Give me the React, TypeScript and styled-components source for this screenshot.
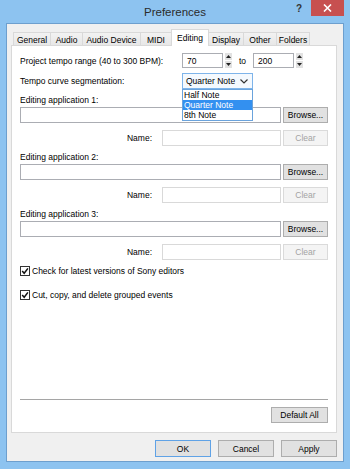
import { createGlobalStyle, styled } from "styled-components"

const GlobalStyle = createGlobalStyle`
  html, body {
    margin: 0;
    padding: 0;
  }
  body {
    font-family: "Liberation Sans", Arial, sans-serif;
    font-size: 8.5px;
    color: #000;
  }
  * {
    box-sizing: border-box;
  }
`

const tabs = [
  { label: "General", width: 38 },
  { label: "Audio", width: 33 },
  { label: "Audio Device", width: 59 },
  { label: "MIDI", width: 32 },
  { label: "Editing", width: 38, active: true },
  { label: "Display", width: 36 },
  { label: "Other", width: 34 },
  { label: "Folders", width: 34 },
]

const notes = ["Half Note", "Quarter Note", "8th Note"]

const SpinArrows = () => (
  <Spin>
    <SpinHalf>
      <svg width="5" height="3" viewBox="0 0 5 3">
        <path d="M0 3 L2.5 0 L5 3 Z" fill="#222" />
      </svg>
    </SpinHalf>
    <SpinHalf>
      <svg width="5" height="3" viewBox="0 0 5 3">
        <path d="M0 0 L2.5 3 L5 0 Z" fill="#222" />
      </svg>
    </SpinHalf>
  </Spin>
)

const EditingApp = ({ index }: { index: number }) => (
  <AppGroup>
    <FieldLabel>Editing application {index}:</FieldLabel>
    <InputRow>
      <TextBox />
      <Button>Browse...</Button>
    </InputRow>
    <NameRow>
      <NameLabel>Name:</NameLabel>
      <NameBox />
      <Button disabled>Clear</Button>
    </NameRow>
  </AppGroup>
)

const CheckRow = ({ children }: { children: string }) => (
  <Check>
    <svg width="10" height="10" viewBox="0 0 10 10">
      <rect x="0.5" y="0.5" width="9" height="9" fill="#fff" stroke="#333" />
      <path
        d="M2.2 5 L4.2 7.3 L7.9 2.4"
        fill="none"
        stroke="#111"
        strokeWidth="1.5"
      />
    </svg>
    {children}
  </Check>
)

const App = () => {
  return (
    <>
      <GlobalStyle />
      <Window>
        <TitleBar>
          <span />
          <Title>Preferences</Title>
          <Controls>
            <Help>?</Help>
            <Close>
              <svg width="9" height="8" viewBox="0 0 9 8">
                <path
                  d="M1 0.5 L8 7.5 M8 0.5 L1 7.5"
                  stroke="#fff"
                  strokeWidth="1.6"
                />
              </svg>
            </Close>
          </Controls>
        </TitleBar>
        <Client>
          <TabRow>
            {tabs.map((t) => (
              <Tab key={t.label} $width={t.width} $active={!!t.active}>
                {t.label}
              </Tab>
            ))}
          </TabRow>
          <Panel>
            <Row>
              <RowLabel>Project tempo range (40 to 300 BPM):</RowLabel>
              <SpinBox>70</SpinBox>
              <SpinArrows />
              <To>to</To>
              <SpinBox>200</SpinBox>
              <SpinArrows />
            </Row>
            <Row $top={5}>
              <RowLabel>Tempo curve segmentation:</RowLabel>
              <Combo>
                Quarter Note
                <svg width="8" height="5" viewBox="0 0 8 5">
                  <path
                    d="M0.5 0.5 L4 4 L7.5 0.5"
                    fill="none"
                    stroke="#333"
                    strokeWidth="1.2"
                  />
                </svg>
                <DropList>
                  {notes.map((n) => (
                    <DropItem key={n} $selected={n === "Quarter Note"}>
                      {n}
                    </DropItem>
                  ))}
                </DropList>
              </Combo>
            </Row>
            <EditingApp index={1} />
            <EditingApp index={2} />
            <EditingApp index={3} />
            <CheckList>
              <CheckRow>Check for latest versions of Sony editors</CheckRow>
              <CheckRow>Cut, copy, and delete grouped events</CheckRow>
            </CheckList>
            <Spacer />
            <Separator />
            <DefaultButton>Default All</DefaultButton>
          </Panel>
          <ButtonRow>
            <Button $width={56} $height={17} $primary>
              OK
            </Button>
            <Button $width={56} $height={17}>
              Cancel
            </Button>
            <Button $width={56} $height={17}>
              Apply
            </Button>
          </ButtonRow>
        </Client>
      </Window>
    </>
  )
}

export default App

const Window = styled.div`
  width: 350px;
  height: 469px;
  background: #8dc3f0;
  padding: 0 6px 7px 6px;
  display: flex;
  flex-direction: column;
`

const TitleBar = styled.div`
  height: 23px;
  display: grid;
  grid-template-columns: 1fr auto 1fr;
  align-items: start;
`

const Title = styled.div`
  font-size: 11.5px;
  color: #2b2b2b;
  line-height: 12px;
  margin-top: 6px;
`

const Controls = styled.div`
  display: flex;
  justify-content: flex-end;
  align-items: flex-start;
`

const Help = styled.span`
  font-size: 10px;
  font-weight: bold;
  color: #333;
  margin: 3px 9px 0 0;
`

const Close = styled.div`
  width: 33px;
  height: 16px;
  background: #c75050;
  display: flex;
  align-items: center;
  justify-content: center;
`

const Client = styled.div`
  flex: 1;
  border: 1px solid #6d9fce;
  background: #f0f0f0;
  padding: 5px 6px 4px 4px;
  display: flex;
  flex-direction: column;
`

const TabRow = styled.div`
  height: 16px;
  display: flex;
  align-items: flex-end;
  padding-left: 2px;
`

const Tab = styled.div<{ $width: number; $active: boolean }>`
  width: ${(p) => p.$width}px;
  height: ${(p) => (p.$active ? 17 : 13)}px;
  margin-left: -1px;
  margin-bottom: ${(p) => (p.$active ? -1 : 0)}px;
  border: 1px solid #d9d9d9;
  border-bottom: none;
  background: ${(p) =>
    p.$active ? "#fff" : "linear-gradient(#f2f2f2, #e7e7e7)"};
  display: flex;
  align-items: center;
  justify-content: center;
  padding-top: ${(p) => (p.$active ? 0 : 1)}px;
  white-space: nowrap;
  position: relative;
  z-index: ${(p) => (p.$active ? 1 : 0)};

  &:first-child {
    margin-left: 0;
  }
`

const Panel = styled.div`
  flex: 1;
  background: #fff;
  border: 1px solid #d9d9d9;
  padding: 7px 8px 9px 8px;
  display: flex;
  flex-direction: column;
`

const Row = styled.div<{ $top?: number }>`
  display: flex;
  align-items: center;
  margin-top: ${(p) => p.$top ?? 0}px;
`

const RowLabel = styled.div`
  width: 162px;
  white-space: nowrap;
`

const SpinBox = styled.div`
  width: 41px;
  height: 15px;
  border: 1px solid #abadb3;
  padding-left: 4px;
  display: flex;
  align-items: center;
`

const Spin = styled.div`
  width: 7px;
  height: 15px;
  margin-left: 2px;
  display: flex;
  flex-direction: column;
  gap: 1px;
`

const SpinHalf = styled.div`
  flex: 1;
  background: #e2e2e2;
  display: flex;
  align-items: center;
  justify-content: center;
`

const To = styled.span`
  margin: 0 7px 0 7px;
`

const Combo = styled.div`
  position: relative;
  width: 71px;
  height: 16px;
  border: 1px solid #7eb4ea;
  background: #f4f9fe;
  padding: 0 4px 0 3px;
  display: flex;
  align-items: center;
  justify-content: space-between;
`

const DropList = styled.div`
  position: absolute;
  top: 15px;
  left: -1px;
  width: 71px;
  background: #fff;
  border: 1px solid #6aa3dc;
  z-index: 2;
`

const DropItem = styled.div<{ $selected: boolean }>`
  height: 10px;
  line-height: 10px;
  padding-left: 1px;
  background: ${(p) => (p.$selected ? "#3390f0" : "#fff")};
  color: ${(p) => (p.$selected ? "#fff" : "#000")};
`

const AppGroup = styled.div`
  margin-top: 6px;
  display: flex;
  flex-direction: column;
`

const FieldLabel = styled.div`
  line-height: 11px;
`

const InputRow = styled.div`
  margin-top: 1px;
  display: flex;
  gap: 2px;
`

const TextBox = styled.div`
  flex: 1;
  height: 16px;
  border: 1px solid #abadb3;
  background: #fff;
`

const NameRow = styled.div`
  margin-top: 7px;
  display: flex;
  align-items: center;
  justify-content: flex-end;
`

const NameLabel = styled.span`
  margin-right: 10px;
`

const NameBox = styled.div`
  width: 119px;
  height: 16px;
  border: 1px solid #d9d9d9;
  background: #fff;
  margin-right: 2px;
`

const Button = styled.button<{
  $width?: number
  $height?: number
  $primary?: boolean
}>`
  width: ${(p) => p.$width ?? 45}px;
  height: ${(p) => p.$height ?? 16}px;
  padding: 0;
  font-family: inherit;
  font-size: 8.5px;
  color: #000;
  background: #e1e1e1;
  border: 1px solid ${(p) => (p.$primary ? "#5fa2e6" : "#adadad")};
  border-radius: 0;
  display: flex;
  align-items: center;
  justify-content: center;

  &:disabled {
    background: #f4f4f4;
    border-color: #dadada;
    color: #a3a3a3;
  }
`

const DefaultButton = styled(Button)`
  width: 57px;
  align-self: flex-end;
  margin-top: 7px;
`

const CheckList = styled.div`
  margin-top: 5px;
  display: flex;
  flex-direction: column;
  gap: 12px;
`

const Check = styled.div`
  display: flex;
  align-items: center;
  gap: 2px;
  height: 12px;
`

const Spacer = styled.div`
  flex: 1;
`

const Separator = styled.div`
  height: 1px;
  background: #a5a5a5;
`

const ButtonRow = styled.div`
  margin-top: 7px;
  display: flex;
  justify-content: flex-end;
  gap: 7px;
`
